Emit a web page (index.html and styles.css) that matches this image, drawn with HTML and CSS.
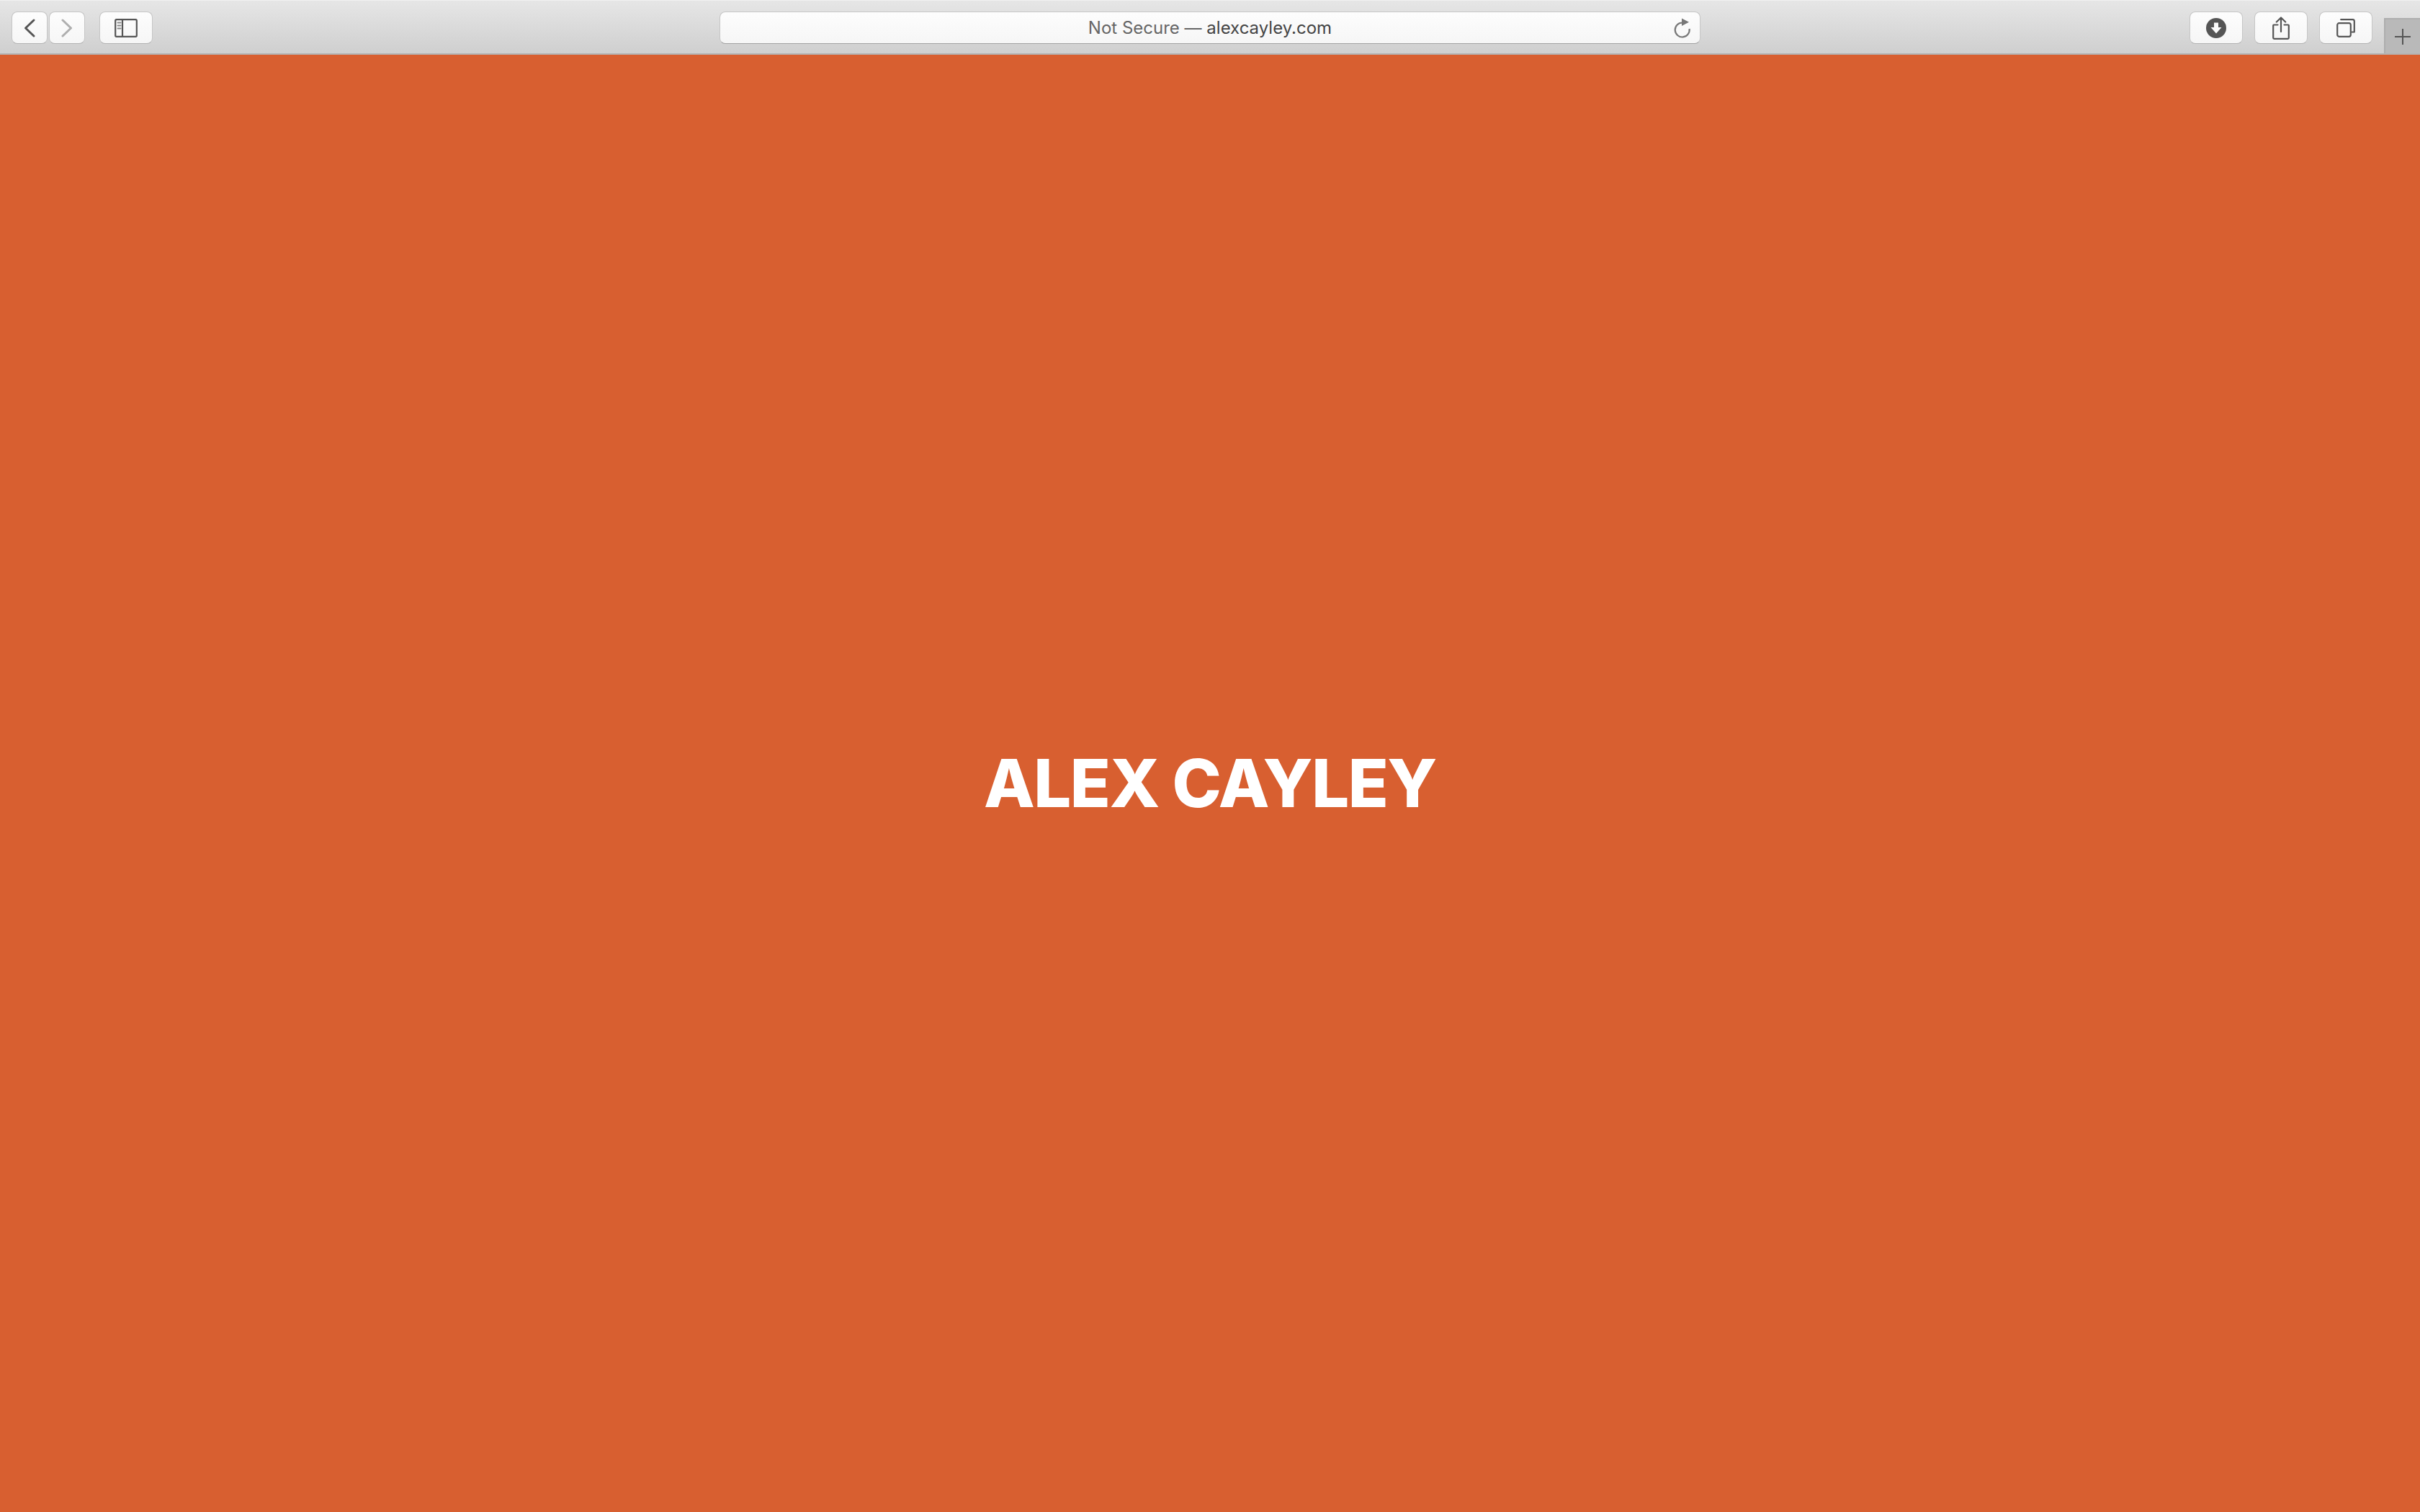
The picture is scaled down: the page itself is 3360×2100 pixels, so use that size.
FILE: index.html
```html
<!DOCTYPE html>
<html lang="en">
<head>
<meta charset="utf-8">
<title>Alex Cayley</title>
<link rel="stylesheet" href="styles.css">
</head>
<body>
<header class="toolbar">
  <div class="group left">
    <div class="nav">
      <button class="btn nav-btn"><svg width="22" height="28" viewBox="0 0 22 28"><path class="ic" d="M17 3 L5.500 14 L17 25" stroke-width="3"/></svg></button>
      <button class="btn nav-btn"><svg class="dim" width="22" height="28" viewBox="0 0 22 28"><path class="ic" d="M5 3 L16.500 14 L5 25" stroke-width="3"/></svg></button>
    </div>
    <button class="btn wide"><svg width="32" height="26" viewBox="0 0 32 26"><rect class="ic" x="1.200" y="1.200" width="29.600" height="23.600" rx="1.500" stroke-width="2.200"/><path class="ic" d="M11 1 V25" stroke-width="2.200"/><path class="ic thin" d="M4.500 5.500 H8.500 M4.500 9.500 H8.500 M4.500 13.500 H8.500" stroke-width="2"/></svg></button>
  </div>
  <div class="address">
    <span class="url"><span class="muted">Not Secure — </span>alexcayley.com</span>
    <svg class="reload" width="26" height="28" viewBox="0 0 26 28"><path class="re" d="M14 6.500 A10 10 0 1 0 23.600 15" stroke-width="2.200"/><path class="tri" d="M13 0.500 L23 5.800 L13 11 Z"/></svg>
  </div>
  <div class="group right">
    <button class="btn wide"><svg width="28" height="28" viewBox="0 0 28 28"><circle class="disc" cx="14" cy="14" r="14"/><path class="arrow" d="M11 6.500 H17 V13 H21.500 L14 21.500 L6.500 13 H11 Z"/></svg></button>
    <button class="btn wide"><svg width="24" height="32" viewBox="0 0 24 32"><path class="ic" d="M7.500 11.500 H2 Q1.200 11.500 1.200 12.500 V29.500 Q1.200 30.800 2.500 30.800 H21.500 Q22.800 30.800 22.800 29.500 V12.500 Q22.800 11.500 22 11.500 H16.500" stroke-width="2.200"/><path class="ic" d="M12 21 V1.800 M5.800 7.500 L12 1.500 L18.200 7.500" stroke-width="2.200"/></svg></button>
    <button class="btn wide"><svg width="26" height="26" viewBox="0 0 26 26"><rect class="ic" x="1.200" y="6.200" width="18.600" height="18.600" rx="2.500" stroke-width="2.200"/><path class="ic" d="M6.200 1.200 H22.500 Q24.800 1.200 24.800 3.500 V18.500 H21.500" stroke-width="2.200"/></svg></button>
  </div>
  <div class="new-tab"><svg width="22" height="22" viewBox="0 0 22 22"><path class="ic" d="M11 0 V22 M0 11 H22" stroke-width="2"/></svg></div>
</header>
<main class="page">
  <h1 class="name">ALEX CAYLEY</h1>
</main>
</body>
</html>
```
FILE: styles.css
```css
* { box-sizing: border-box; }
html, body { margin: 0; height: 100%; }
body {
  width: 3360px;
  height: 2100px;
  overflow: hidden;
  display: flex;
  flex-direction: column;
  background: #d85f30;
  font-family: "Liberation Sans", Arial, sans-serif;
}
.toolbar {
  position: relative;
  flex: 0 0 76px;
  height: 76px;
  display: grid;
  grid-template-columns: 1fr 1362px 1fr;
  align-items: start;
  padding: 15px 16px 0;
  background: linear-gradient(#e6e6e6, #cfcfcf);
  border-top: 1px solid #f0f0f0;
  border-bottom: 2px solid #b4b4b4;
}
.group { display: flex; align-items: flex-start; }
.left { gap: 20px; }
.right { gap: 16px; justify-self: end; margin-right: 50px; }
.nav { display: flex; gap: 2px; }
.btn {
  height: 45px;
  padding: 0;
  display: flex;
  align-items: center;
  justify-content: center;
  background: linear-gradient(#fdfdfd, #f6f6f6);
  border: 1px solid #c6c6c6;
  border-bottom-color: #b2b2b2;
  border-radius: 8px;
}
.nav-btn { width: 50px; }
.wide { width: 74px; }
.dim { opacity: 0.45; }
.ic { fill: none; stroke: #555; stroke-linecap: round; stroke-linejoin: round; }
.thin { stroke: #888; }
.disc { fill: #555; }
.arrow { fill: #fbfbfb; }
.re { fill: none; stroke: #777; }
.tri { fill: #777; }
.address {
  height: 45px;
  position: relative;
  display: flex;
  align-items: center;
  justify-content: center;
  background: linear-gradient(#fdfdfd, #f6f6f6);
  border: 1px solid #c6c6c6;
  border-bottom-color: #a2a2a2;
  border-radius: 8px;
}
.url { font-size: 24px; color: #444; font-family: "Inter", "Liberation Sans", sans-serif; }
.muted { color: #666; }
.reload { position: absolute; right: 12px; top: 8px; }
.new-tab {
  position: absolute;
  right: 0;
  top: 24px;
  width: 50px;
  height: 49px;
  display: flex;
  align-items: center;
  justify-content: center;
  background: #b9b9b9;
  border: 2px solid #aeaeae;
  border-right: 0;
  border-bottom: 0;
}
.page {
  flex: 1;
  display: flex;
  align-items: center;
  justify-content: center;
}
.name {
  margin: 0;
  font-family: "Inter", "Liberation Sans", sans-serif;
  font-weight: 800;
  font-size: 92px;
  line-height: 1;
  letter-spacing: -1.5px;
  color: #fff;
}
```
